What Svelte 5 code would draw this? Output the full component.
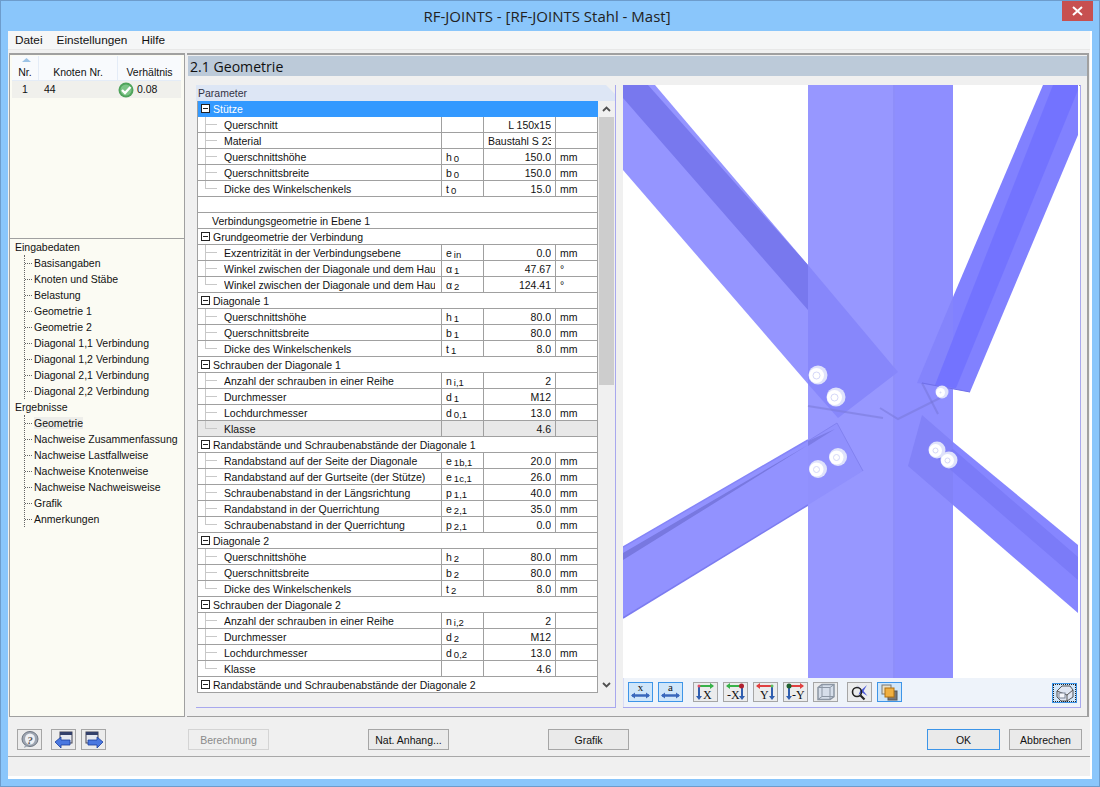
<script>
  const geo = [
    ['Querschnitt', '', '', 'L 150x15', ''],
    ['Material', '', '', 'Baustahl S 235', ''],
    ['Querschnittshöhe', 'h', '0', '150.0', 'mm'],
    ['Querschnittsbreite', 'b', '0', '150.0', 'mm'],
    ['Dicke des Winkelschenkels', 't', '0', '15.0', 'mm']
  ];
  const rows = [
    { g: 'Stütze', sel: true },
    ...geo.map((r, i) => ({ r, last: i === 4 })),
    { blank: true },
    { plain: 'Verbindungsgeometrie in Ebene 1' },
    { g: 'Grundgeometrie der Verbindung' },
    { r: ['Exzentrizität in der Verbindungsebene', 'e', 'in', '0.0', 'mm'] },
    { r: ['Winkel zwischen der Diagonale und dem Hauptstab', 'α', '1', '47.67', '°'] },
    { r: ['Winkel zwischen der Diagonale und dem Hauptstab', 'α', '2', '124.41', '°'], last: true },
    { g: 'Diagonale 1' },
    { r: ['Querschnittshöhe', 'h', '1', '80.0', 'mm'] },
    { r: ['Querschnittsbreite', 'b', '1', '80.0', 'mm'] },
    { r: ['Dicke des Winkelschenkels', 't', '1', '8.0', 'mm'], last: true },
    { g: 'Schrauben der Diagonale 1' },
    { r: ['Anzahl der schrauben in einer Reihe', 'n', 'i,1', '2', ''] },
    { r: ['Durchmesser', 'd', '1', 'M12', ''] },
    { r: ['Lochdurchmesser', 'd', '0,1', '13.0', 'mm'] },
    { r: ['Klasse', '', '', '4.6', ''], shade: true, last: true },
    { g: 'Randabstände und Schraubenabstände der Diagonale 1' },
    { r: ['Randabstand auf der Seite der Diagonale', 'e', '1b,1', '20.0', 'mm'] },
    { r: ['Randabstand auf der Gurtseite (der Stütze)', 'e', '1c,1', '26.0', 'mm'] },
    { r: ['Schraubenabstand in der Längsrichtung', 'p', '1,1', '40.0', 'mm'] },
    { r: ['Randabstand in der Querrichtung', 'e', '2,1', '35.0', 'mm'] },
    { r: ['Schraubenabstand in der Querrichtung', 'p', '2,1', '0.0', 'mm'], last: true },
    { g: 'Diagonale 2' },
    { r: ['Querschnittshöhe', 'h', '2', '80.0', 'mm'] },
    { r: ['Querschnittsbreite', 'b', '2', '80.0', 'mm'] },
    { r: ['Dicke des Winkelschenkels', 't', '2', '8.0', 'mm'], last: true },
    { g: 'Schrauben der Diagonale 2' },
    { r: ['Anzahl der schrauben in einer Reihe', 'n', 'i,2', '2', ''] },
    { r: ['Durchmesser', 'd', '2', 'M12', ''] },
    { r: ['Lochdurchmesser', 'd', '0,2', '13.0', 'mm'] },
    { r: ['Klasse', '', '', '4.6', ''], last: true },
    { g: 'Randabstände und Schraubenabstände der Diagonale 2' }
  ];
  const inputs = ['Basisangaben', 'Knoten und Stäbe', 'Belastung', 'Geometrie 1', 'Geometrie 2', 'Diagonal 1,1 Verbindung', 'Diagonal 1,2 Verbindung', 'Diagonal 2,1 Verbindung', 'Diagonal 2,2 Verbindung'];
  const results = ['Geometrie', 'Nachweise Zusammenfassung', 'Nachweise Lastfallweise', 'Nachweise Knotenweise', 'Nachweise Nachweisweise', 'Grafik', 'Anmerkungen'];
  const bolts = [[818,375,9.5],[836,397,9.5],[818,469,9],[838,457,9],[937,450,8.5],[949,460,8.5],[942,392,6.5]];
</script>

<div class="window">
  <div class="title">RF-JOINTS - [RF-JOINTS Stahl - Mast]</div>
  <div class="close"><svg width="11" height="10" viewBox="0 0 11 10"><path d="M1 1l9 8M10 1l-9 8" stroke="#fff" stroke-width="2"/></svg></div>
  <div class="client">
    <div class="menu"><span>Datei</span><span>Einstellungen</span><span>Hilfe</span></div>
    <div class="main">
      <div class="side">
        <div class="list">
          <div class="lhead">
            <div class="lh nr"><svg class="sort" width="9" height="4" viewBox="0 0 9 4"><path d="M4.5 0L9 4H0z" fill="#9cc3e6"/></svg>Nr.</div>
            <div class="lh kn">Knoten Nr.</div>
            <div class="lh vh">Verhältnis</div>
          </div>
          <div class="lrow">
            <span class="lnr">1</span><span class="lkn">44</span>
            <span class="lvh">
              <svg width="16" height="16" viewBox="0 0 16 16"><circle cx="8" cy="8" r="7.5" fill="#4fa35b"/><circle cx="8" cy="8" r="5.6" fill="#7cc486"/><path d="M4 8l3 3 5.500-6" fill="none" stroke="#fff" stroke-width="2.400"/></svg>
              0.08
            </span>
          </div>
        </div>
        <div class="tree">
          <div class="troot">Eingabedaten</div>
          <div class="tkids">
            {#each inputs as t}<div class="titem">{t}</div>{/each}
          </div>
          <div class="troot">Ergebnisse</div>
          <div class="tkids">
            {#each results as t, i}<div class="titem" class:cur={i === 0}><span>{t}</span></div>{/each}
          </div>
        </div>
      </div>

      <div class="panel">
        <div class="heading">2.1 Geometrie</div>
        <div class="content">
          <div class="group">
            <div class="ghead">Parameter</div>
            <div class="gbody">
              <div class="table">
                {#each rows as row}
                  {#if row.g}
                    <div class="row grp" class:sel={row.sel}>
                      <svg class="box" width="9" height="9" viewBox="0 0 9 9"><rect x=".5" y=".5" width="8" height="8" fill="#fff" stroke="#222"/><path d="M2 4.500h5" stroke="#222"/></svg>
                      <span>{row.g}</span>
                    </div>
                  {:else if row.blank}
                    <div class="row"></div>
                  {:else if row.plain}
                    <div class="row plain">{row.plain}</div>
                  {:else}
                    <div class="row data" class:shade={row.shade}>
                      <div class="cell lab">
                        <i class="vline" class:end={row.last}></i><i class="hline"></i>
                        <span>{row.r[0]}</span>
                      </div>
                      <div class="cell sym">{row.r[1]}<sub>{row.r[2]}</sub></div>
                      <div class="cell val"><span>{row.r[3]}</span></div>
                      <div class="cell unit">{row.r[4]}</div>
                    </div>
                  {/if}
                {/each}
              </div>
              <div class="scroll">
                <div class="sbtn"><svg width="9" height="6" viewBox="0 0 9 6"><path d="M1 5l3.500-3.500L8 5" fill="none" stroke="#505050" stroke-width="1.800"/></svg></div>
                <div class="thumb"></div>
                <div class="track"></div>
                <div class="sbtn"><svg width="9" height="6" viewBox="0 0 9 6"><path d="M1 1l3.500 3.500L8 1" fill="none" stroke="#505050" stroke-width="1.800"/></svg></div>
              </div>
            </div>
          </div>

          <div class="view">
            <div class="canvas">
              <svg width="456" height="593" viewBox="623 85 456 593">
                <rect x="623" y="85" width="456" height="593" fill="#fff"/>
                <!-- upper left diagonal -->
                <path d="M623 85H655L808 265V384L623 170z" fill="#9595ff"/>
                <path d="M623 85H648L808 265V310L623 98z" fill="#7878ee"/>
                <!-- upper right diagonal -->
                <path d="M1043 85H1078V135L970 392 953 389V297z" fill="#8181ff"/>
                <path d="M1053 85H1078V90L956 388 953 388V339z" fill="#7373ff"/>
                <!-- lower left diagonal -->
                <path d="M623 547L808 440V505L623 618z" fill="#9292ff"/>
                <path d="M623 553L808 445 623 560z" fill="#7878e0"/>
                <path d="M623 618L808 505" stroke="#7c7cf0" stroke-width="1.500"/>
                <path d="M623 547L808 440" stroke="#8585f8" stroke-width="1.500"/>
                <!-- lower right diagonal -->
                <path d="M953 442L1078 545V613L953 505z" fill="#8686ff"/>
                <path d="M953 449L1078 557V580L953 472z" fill="#7b7bf8"/>
                <!-- column -->
                <rect x="808" y="85" width="86" height="593" fill="#9797ff"/>
                <rect x="894" y="85" width="59" height="593" fill="#8e8eff"/>
                <rect x="893" y="85" width="2" height="593" fill="#8e8efa"/>
                <!-- overlap zones on the column -->
                <path d="M808 265L898 372 838 418 808 384z" fill="#8787fb"/>
                <path d="M808 441L837 423 863 471 808 505z" fill="#9090fd"/>
                <path d="M808 441L835 429 808 446z" fill="#7c7ce6"/>
                <path d="M808 441L837 423 863 471" fill="none" stroke="#8282f0"/>
                <path d="M922 415L953 442V505L908 466z" fill="#8282f8"/>
                <path d="M953 449V472L938 459z" fill="#7b7bf4"/>
                <path d="M953 297L917 383 953 389z" fill="#8484fc"/>
                <path d="M953 339L935 385 953 388z" fill="#7373ff"/>
                <!-- gusset -->
                <path d="M808 406L883 418" stroke="#7c7cdc" stroke-width="2" opacity=".6"/>
                <path d="M880 408L898 419 940 398" fill="none" stroke="#7878d8" stroke-width="2" opacity=".55"/>
                <path d="M922 383L938 414" stroke="#7575d8" stroke-width="2" opacity=".5"/>
                <path d="M922 383L970 392" stroke="#7070e8" stroke-width="1"/>
                <!-- bolts -->
                {#each bolts as b}
                  <circle cx={b[0]} cy={b[1]} r={b[2]} fill="#dfe2fb"/>
                  <circle cx={b[0] - 1.5} cy={b[1] + .5} r={b[2] - 2} fill="#fff"/>
                  <circle cx={b[0] - 1.5} cy={b[1] + .5} r={b[2] - 6} fill="none" stroke="#d5d8f8"/>
                {/each}
              </svg>
            </div>
            <div class="tools">
              <button class="tb on"><svg width="21" height="16" viewBox="0 0 21 16"><text x="10.500" y="7" class="it">x</text><path d="M2 11.500h17" stroke="#3a68bc" stroke-width="2.500"/><path d="M5 8.500l-4 3 4 3M16 8.500l4 3-4 3" fill="#3a68bc"/></svg></button>
              <button class="tb on"><svg width="21" height="16" viewBox="0 0 21 16"><text x="10.500" y="7" class="it">a</text><path d="M2 11.500h17" stroke="#3a68bc" stroke-width="2.500"/><path d="M5 8.500l-4 3 4 3M16 8.500l4 3-4 3" fill="#3a68bc"/></svg></button>
              <button class="tb gap"><svg width="21" height="18" viewBox="0 0 21 18"><path d="M3 3h15" stroke="#38b24a" stroke-width="2"/><path d="M15 0l4 3-4 3z" fill="#38b24a"/><path d="M4 3v12" stroke="#2f5eb0" stroke-width="2"/><path d="M1 13l3 4 3-4z" fill="#2f5eb0"/><circle cx="4" cy="3" r="1.500" fill="#e0506a"/><text x="8" y="16" class="ax">X</text></svg></button>
              <button class="tb"><svg width="21" height="18" viewBox="0 0 21 18"><path d="M2 3h14" stroke="#38b24a" stroke-width="2"/><path d="M5 0L1 3l4 3z" fill="#38b24a"/><path d="M17 3v12" stroke="#2f5eb0" stroke-width="2"/><path d="M14 13l3 4 3-4z" fill="#2f5eb0"/><circle cx="16.500" cy="3" r="2.500" fill="#b02030"/><text x="2" y="16" class="ax">-X</text></svg></button>
              <button class="tb"><svg width="21" height="18" viewBox="0 0 21 18"><path d="M2 3h14" stroke="#e04040" stroke-width="2"/><path d="M5 0L1 3l4 3z" fill="#e04040"/><path d="M17 3v12" stroke="#2f5eb0" stroke-width="2"/><path d="M14 13l3 4 3-4z" fill="#2f5eb0"/><circle cx="17" cy="3" r="1.500" fill="#5ac060"/><text x="5" y="16" class="ax">Y</text></svg></button>
              <button class="tb"><svg width="21" height="18" viewBox="0 0 21 18"><path d="M4 3h14" stroke="#e04040" stroke-width="2"/><path d="M15 0l4 3-4 3z" fill="#e04040"/><path d="M4 3v12" stroke="#2f5eb0" stroke-width="2"/><path d="M1 13l3 4 3-4z" fill="#2f5eb0"/><circle cx="4" cy="3" r="2.500" fill="#1f6030"/><text x="7" y="16" class="ax">-Y</text></svg></button>
              <button class="tb"><svg width="20" height="18" viewBox="0 0 20 18"><path d="M6 1.500h12v12l-4 3H2v-12z" fill="#d6deea" stroke="#8c96a4" stroke-width="1.500"/><path d="M2 4.500h12v12M14 4.500l4-3M6 1.500v12H18M6 13.500l-4 3" fill="none" stroke="#8c96a4"/></svg></button>
              <button class="tb gap2"><svg width="20" height="18" viewBox="0 0 20 18"><path d="M7 2l4.500 5L17 2l-3.500 6 4 5-5.500-3.500L8.500 12l2-5z" fill="#4a58d8"/><circle cx="7" cy="9" r="4.500" fill="none" stroke="#222" stroke-width="1.600"/><path d="M10.500 12.500l4 4" stroke="#222" stroke-width="2.200"/></svg></button>
              <button class="tb on"><svg width="19" height="18" viewBox="0 0 19 18"><rect x="2" y="2" width="9" height="9" fill="#e8e0c8" stroke="#777"/><rect x="8" y="8" width="9" height="9" fill="#777" stroke="#555"/><rect x="5" y="5" width="9" height="9" fill="#f0b040" stroke="#b07010"/></svg></button>
              <button class="tb on focus"><svg width="20" height="17" viewBox="0 0 20 17"><path d="M2 6l5-5h8l3 4v7l-6 4H6L2 12z" fill="#dfe6f2" stroke="#555"/><path d="M2 6l10 4v6M12 10l6-5" fill="none" stroke="#555"/><rect x="4" y="8" width="6" height="5" fill="#f4f6fb" stroke="#7a8496"/></svg></button>
            </div>
          </div>
        </div>
      </div>
    </div>
    <div class="footer">
      <button class="fi"><svg width="20" height="17" viewBox="0 0 20 17"><ellipse cx="10" cy="8" rx="8" ry="7.500" fill="#9ea6b2" stroke="#6e7682"/><ellipse cx="10" cy="8" rx="5" ry="5.500" fill="#eef0f4"/><path d="M5 14l-1 3 4-2z" fill="#9ea6b2"/><text x="10" y="12.500" class="q">?</text></svg></button>
      <button class="fi m1"><svg width="20" height="18" viewBox="0 0 20 18"><rect x="6" y="1" width="12" height="11" fill="#e6e9f0" stroke="#445"/><rect x="6" y="1" width="12" height="3" fill="#33406a"/><path d="M1 11l6-5v3h9v5H7v3z" fill="#4a78e0" stroke="#1b3e9c" stroke-width=".8"/></svg></button>
      <button class="fi m2"><svg width="20" height="18" viewBox="0 0 20 18"><rect x="2" y="1" width="12" height="11" fill="#e6e9f0" stroke="#445"/><rect x="2" y="1" width="12" height="3" fill="#33406a"/><path d="M19 11l-6-5v3H4v5h9v3z" fill="#4a78e0" stroke="#1b3e9c" stroke-width=".8"/></svg></button>
      <button class="fb off b1">Berechnung</button>
      <button class="fb b2">Nat. Anhang...</button>
      <button class="fb b3">Grafik</button>
      <button class="fb ok">OK</button>
      <button class="fb b5">Abbrechen</button>
    </div>
    <div class="status"></div>
  </div>
</div>

<style>
  :global(body) { margin: 0; background: #8ac6fb; }
  * { box-sizing: border-box; }
  .window {
    position: relative; width: 1100px; height: 787px; padding: 30px 7px 7px;
    background: #8ac6fb; border: 1px solid #6d9ccc; overflow: hidden;
    font: 10.500px/17px "Liberation Sans", Arial, sans-serif; color: #111;
  }
  .title { position: absolute; top: 5px; left: 0; right: 6px; text-align: center; font: 15px/20px "Open Sans", sans-serif; color: #222; }
  .close { position: absolute; top: 0; left: 1061px; width: 31px; height: 20px; background: #c75050; display: flex; align-items: center; justify-content: center; }
  .client { height: 748px; background: #f0f0f0; border-bottom: 3px solid #fff; border-right: 2px solid #fff; display: flex; flex-direction: column; }
  .menu { height: 19px; background: #f5f6f7; border-bottom: 1px solid #e8e8e8; padding-left: 7px; display: flex; gap: 14px; font-size: 11.800px; line-height: 19px; }
  .main { margin-top: 3px; height: 664px; display: flex; gap: 2px; padding-left: 1px; }
  .side { width: 176px; display: flex; flex-direction: column; }
  .list { height: 185px; border: 1px solid #a0a0a0; border-bottom: 0; border-top-width: 2px; background: #fbfbf3; padding: 1px 3px 0 2px; }
  .lhead { display: flex; height: 25px; background: #f8fafd; border-bottom: 1px solid #e4ecf7; }
  .lh { position: relative; padding-top: 8px; text-align: center; border-right: 1px solid #e4ecf7; }
  .nr { width: 27px; } .kn { width: 79px; } .vh { width: 63px; border: 0; }
  .sort { position: absolute; top: 2px; left: 10px; }
  .lrow { height: 17px; background: #f0f0ec; display: flex; align-items: center; }
  .lnr { width: 27px; padding-left: 10px; } .lkn { width: 79px; padding-left: 5px; }
  .lvh { display: flex; align-items: center; gap: 3px; }
  .tree { flex: 1; background: #fbfbf3; border: 1px solid #a0a0a0; padding: 0 0 0 5px; white-space: nowrap; }
  .troot { height: 16px; }
  .tkids { margin-left: 9px; border-left: 1px dotted #666; }
  .titem { height: 16px; padding-left: 9px; position: relative; }
  .titem::before { content: ""; position: absolute; left: 0; top: 8px; width: 7px; border-top: 1px dotted #666; }
  .cur span { background: #eeeeea; }
  .panel { width: 902px; border-top: 2px solid #a0a0a0; border-right: 2px solid #a0a0a0; border-bottom: 1px solid #a0a0a0; padding: 1px 0 0 1px; }
  .heading { width: 899px; height: 20px; background: #bccad9; font: 14.100px/22px "Open Sans", sans-serif; padding-left: 2px; color: #111; }
  .content { display: flex; gap: 7px; margin-top: 9px; padding-left: 8px; }
  .group { width: 420px; height: 623px; border-right: 1px solid #a8a8ee; border-bottom: 1px solid #a8a8ee; }
  .ghead { height: 16px; background: #dde6f5; padding-left: 2px; color: #334; clip-path: polygon(0 0, 410px 0, 420px 10px, 420px 16px, 0 16px); }
  .gbody { display: flex; padding-left: 1px; }
  .table { width: 401px; height: 592px; border-left: 1px solid #a0a0a0; background: #fff; }
  .row { height: 16px; border-bottom: 1px solid #a0a0a0; border-right: 1px solid #a0a0a0; line-height: 17px; background: #fff; white-space: nowrap; }
  .grp { display: flex; align-items: flex-start; padding-left: 3px; gap: 3px; }
  .grp .box { margin-top: 3px; flex: none; }
  .grp.sel { background: #3399ff; color: #fff; border-color: #3399ff; }
  .plain { padding-left: 14px; }
  .data { display: grid; grid-template-columns: 244px 42px 72px 1fr; }
  .shade { background: #e8e8e8; }
  .cell { border-right: 1px solid #a0a0a0; overflow: hidden; white-space: nowrap; position: relative; }
  .cell:last-child { border-right: 0; }
  .lab span { display: block; margin: 0 6px 0 26px; overflow: hidden; }
  .vline { position: absolute; left: 7px; top: -1px; bottom: 0; border-left: 1px solid #c8c8c8; }
  .vline.end { bottom: 7px; }
  .hline { position: absolute; left: 8px; width: 11px; top: 7px; border-top: 1px solid #c8c8c8; }
  .sym { padding-left: 4px; }
  sub { font-size: 9.500px; line-height: 0; margin-left: 2px; vertical-align: -1px; }
  .val span { display: block; margin: 0 4px; overflow: hidden; text-align: right; }
  .unit { padding-left: 4px; }
  .scroll { width: 17px; height: 592px; display: flex; flex-direction: column; background: #f0f0f0; }
  .sbtn { height: 16px; display: flex; align-items: center; justify-content: center; }
  .thumb { height: 268px; background: #cdcdcd; margin: 0 1px; }
  .track { flex: 1; }
  .view { width: 458px; height: 623px; border-right: 1px solid #a8a8ee; border-bottom: 1px solid #a8a8ee; }
  .canvas { height: 593px; border-top: 1px solid #a0a0a0; border-left: 1px solid #a0a0a0; background: #fff; }
  .canvas svg { display: block; margin-top: -1px; margin-left: -1px; }
  .tools { height: 29px; background: #eef3fa; display: flex; gap: 5px; padding: 4px 0 0 4px; border-left: 1px solid #d8dcf4; }
  .tb { width: 25px; height: 20px; padding: 0; background: #ebeced; border: 1px solid #a6a6a6; display: flex; align-items: center; justify-content: center; }
  .tb.on { background: #cfe6fa; border-color: #3d95e8; }
  .tb.gap { margin-left: 5px; }
  .tb.gap2 { margin-left: 4px; }
  .tb.focus { margin-left: auto; margin-right: 3px; margin-top: 1px; outline: 1px dotted #222; outline-offset: -2px; }
  .it { font: 11px "Liberation Serif", serif; text-anchor: middle; fill: #111; }
  .ax { font: 12px "Liberation Serif", serif; fill: #111; }
  .q { font: italic bold 11px "Liberation Serif", serif; text-anchor: middle; fill: #555; }
  .footer { height: 40px; position: relative; display: flex; padding: 12px 0 0 9px; border-bottom: 1px solid #a8a8a8; }
  .fi { width: 25px; height: 21px; padding: 0; background: #ececec; border: 1px solid #a6a6a6; display: flex; align-items: center; justify-content: center; }
  .m1 { margin-left: 9px; } .m2 { margin-left: 5px; }
  .fb { height: 21px; padding: 0; width: 81px; background: #eaeaea; border: 1px solid #a6a6a6; font: 10.500px "Liberation Sans", Arial, sans-serif; color: #111; }
  .fb.off { color: #8a8a8a; border-color: #d4d4d4; background: #efefef; }
  .b1 { margin-left: 82px; } .b2 { margin-left: 99px; } .b3 { margin-left: 99px; }
  .ok { width: 73px; margin-left: 298px; border-color: #3d95e8; }
  .b5 { width: 73px; margin-left: 9px; }
  .status { flex: 1; background: #f0f0f0; }
</style>
